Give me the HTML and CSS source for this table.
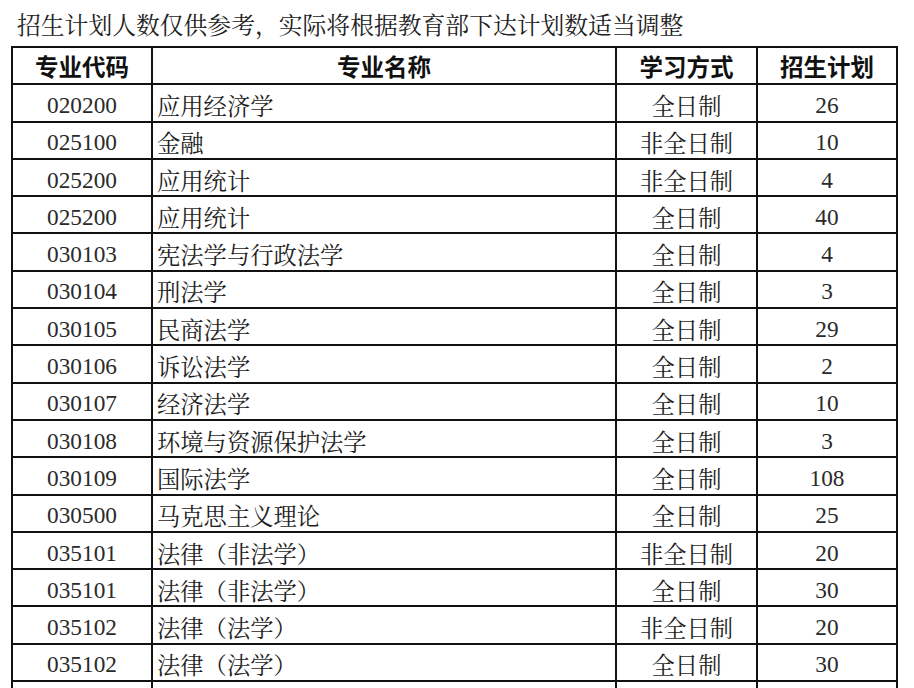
FILE: index.html
```html
<!DOCTYPE html>
<html lang="zh-CN">
<head>
<meta charset="utf-8">
<title>招生计划</title>
<link rel="stylesheet" href="styles.css">
</head>
<body>
<p class="note">招生计划人数仅供参考，实际将根据教育部下达计划数适当调整</p>
<table class="plan">
  <thead>
    <tr>
      <th class="c-code">专业代码</th>
      <th class="c-name">专业名称</th>
      <th class="c-mode">学习方式</th>
      <th class="c-num">招生计划</th>
    </tr>
  </thead>
  <tbody>
    <tr><td class="code">020200</td><td class="name">应用经济学</td><td class="mode">全日制</td><td class="num">26</td></tr>
    <tr><td class="code">025100</td><td class="name">金融</td><td class="mode">非全日制</td><td class="num">10</td></tr>
    <tr><td class="code">025200</td><td class="name">应用统计</td><td class="mode">非全日制</td><td class="num">4</td></tr>
    <tr><td class="code">025200</td><td class="name">应用统计</td><td class="mode">全日制</td><td class="num">40</td></tr>
    <tr><td class="code">030103</td><td class="name">宪法学与行政法学</td><td class="mode">全日制</td><td class="num">4</td></tr>
    <tr><td class="code">030104</td><td class="name">刑法学</td><td class="mode">全日制</td><td class="num">3</td></tr>
    <tr><td class="code">030105</td><td class="name">民商法学</td><td class="mode">全日制</td><td class="num">29</td></tr>
    <tr><td class="code">030106</td><td class="name">诉讼法学</td><td class="mode">全日制</td><td class="num">2</td></tr>
    <tr><td class="code">030107</td><td class="name">经济法学</td><td class="mode">全日制</td><td class="num">10</td></tr>
    <tr><td class="code">030108</td><td class="name">环境与资源保护法学</td><td class="mode">全日制</td><td class="num">3</td></tr>
    <tr><td class="code">030109</td><td class="name">国际法学</td><td class="mode">全日制</td><td class="num">108</td></tr>
    <tr><td class="code">030500</td><td class="name">马克思主义理论</td><td class="mode">全日制</td><td class="num">25</td></tr>
    <tr><td class="code">035101</td><td class="name">法律（非法学）</td><td class="mode">非全日制</td><td class="num">20</td></tr>
    <tr><td class="code">035101</td><td class="name">法律（非法学）</td><td class="mode">全日制</td><td class="num">30</td></tr>
    <tr><td class="code">035102</td><td class="name">法律（法学）</td><td class="mode">非全日制</td><td class="num">20</td></tr>
    <tr><td class="code">035102</td><td class="name">法律（法学）</td><td class="mode">全日制</td><td class="num">30</td></tr>
    <tr><td class="code"></td><td class="name"></td><td class="mode"></td><td class="num"></td></tr>
  </tbody>
</table>
</body>
</html>
```
FILE: styles.css
```css
html, body {
  margin: 0;
  padding: 0;
  background: #ffffff;
}

body {
  color: #1e1e1e;
  font-family: "Noto Serif CJK SC", "Noto Sans CJK SC", serif;
  overflow: hidden;
}

.note {
  margin: 0;
  padding: 9px 0 0 17px;
  height: 30px;
  line-height: 30px;
  font-size: 23.8px;
  font-weight: 400;
  color: #222;
  white-space: nowrap;
}

.plan {
  margin: 7px 0 0 11px;
  border-collapse: separate;
  border-spacing: 0;
  table-layout: fixed;
  width: 887px;
  border-top: 2px solid #111;
  border-left: 2px solid #111;
}

.plan th,
.plan td {
  box-sizing: border-box;
  height: 37.3px;
  padding: 4px 0 0 0;
  border-right: 2px solid #111;
  border-bottom: 2px solid #111;
  line-height: 30px;
  white-space: nowrap;
  vertical-align: middle;
}

.plan th {
  font-family: "Noto Sans CJK SC", sans-serif;
  font-weight: 700;
  font-size: 23.5px;
  color: #111;
  text-align: center;
  padding-top: 1px;
}

.c-code { width: 140px; }
.c-name { width: 464px; }
.c-mode { width: 141px; }
.c-num  { width: 140px; }

.plan td {
  font-size: 23.3px;
  font-weight: 400;
}

.plan td.code,
.plan td.num {
  font-family: "Liberation Serif", "Times New Roman", serif;
  color: #2a2a2a;
}

.code,
.mode,
.num {
  text-align: center;
}

.plan td.name {
  text-align: left;
  padding-left: 4px;
}
```
